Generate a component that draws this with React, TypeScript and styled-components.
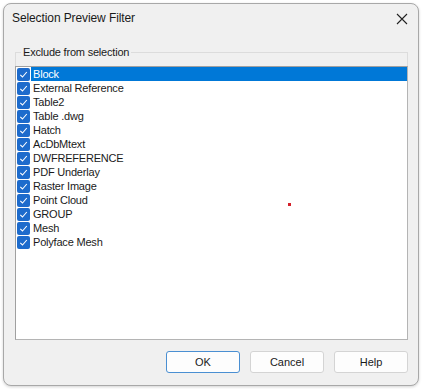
import styled, { createGlobalStyle } from 'styled-components';

const GlobalStyle = createGlobalStyle`
  html, body {
    margin: 0;
    padding: 0;
    background: #ffffff;
  }
  body {
    font-family: "Liberation Sans", Arial, sans-serif;
  }
`;

const items = [
  'Block',
  'External Reference',
  'Table2',
  'Table .dwg',
  'Hatch',
  'AcDbMtext',
  'DWFREFERENCE',
  'PDF Underlay',
  'Raster Image',
  'Point Cloud',
  'GROUP',
  'Mesh',
  'Polyface Mesh',
];

const Page = styled.div`
  padding: 3px;
`;

const Window = styled.div`
  box-sizing: border-box;
  width: 416px;
  height: 383px;
  display: flex;
  flex-direction: column;
  background: #f0f0f0;
  border: 1px solid #a8a8a8;
  border-radius: 8px;
  box-shadow: 0 1px 3px rgba(0, 0, 0, 0.18);
  overflow: hidden;
`;

const TitleBar = styled.div`
  height: 28px;
  display: flex;
  align-items: center;
  justify-content: space-between;
  padding: 0 10px 0 8px;
`;

const Title = styled.span`
  font-size: 12px;
  color: #1a1a1a;
  letter-spacing: -0.1px;
`;

const CloseButton = styled.span`
  display: flex;
  width: 12px;
  height: 12px;
  margin-top: 1px;
`;

const Body = styled.div`
  flex: 1;
  display: flex;
  flex-direction: column;
  padding: 14px 10px 0 11px;
`;

const Group = styled.fieldset`
  margin: 0;
  padding: 7px 0 0;
  border: 1px solid #dcdcdc;
  border-bottom: none;
  min-width: 0;
`;

const Legend = styled.legend`
  margin-left: 5px;
  padding: 0 2px;
  font-size: 11px;
  line-height: 13px;
  color: #1a1a1a;
  letter-spacing: -0.2px;
`;

const List = styled.div`
  position: relative;
  box-sizing: border-box;
  height: 274px;
  margin: 0 -1px;
  background: #ffffff;
  border: 1px solid #b4b4b4;
  border-left-color: #a0a0a0;
  border-top-color: #a0a0a0;
`;

const Row = styled.div`
  display: flex;
  align-items: center;
  height: 14px;
  padding-left: 1px;
`;

const Check = styled.span`
  box-sizing: border-box;
  width: 13px;
  height: 13px;
  border-radius: 2px;
  background: #1d6bcc;
  display: flex;
  align-items: center;
  justify-content: center;
  flex-shrink: 0;
`;

const Label = styled.span<{ $selected?: boolean }>`
  flex: 1;
  margin-left: 1px;
  padding-left: 2px;
  height: 14px;
  line-height: 15px;
  font-size: 11px;
  letter-spacing: -0.2px;
  color: ${(p) => (p.$selected ? '#ffffff' : '#1a1a1a')};
  background: ${(p) => (p.$selected ? '#0078d7' : 'transparent')};
`;

const Dot = styled.span`
  position: absolute;
  left: 272px;
  top: 136px;
  width: 3px;
  height: 3px;
  background: #d4202a;
`;

const Buttons = styled.div`
  display: flex;
  justify-content: flex-end;
  gap: 10px;
  padding-top: 11px;
`;

const Button = styled.button<{ $primary?: boolean }>`
  box-sizing: border-box;
  width: 74px;
  height: 22px;
  padding: 0;
  font-family: "Liberation Sans", Arial, sans-serif;
  font-size: 11px;
  color: #1a1a1a;
  background: #fdfdfd;
  border: 1px solid ${(p) => (p.$primary ? '#4a8fd2' : '#d4d4d4')};
  border-radius: 3px;
`;

const App = () => {
  return (
    <Page>
      <GlobalStyle />
      <Window>
        <TitleBar>
          <Title>Selection Preview Filter</Title>
          <CloseButton>
            <svg width="12" height="12" viewBox="0 0 12 12">
              <path d="M1 1 L11 11 M11 1 L1 11" stroke="#222" strokeWidth="1.1" fill="none" />
            </svg>
          </CloseButton>
        </TitleBar>
        <Body>
          <Group>
            <Legend>Exclude from selection</Legend>
            <List>
              {items.map((item, i) => (
                <Row key={item}>
                  <Check>
                    <svg width="9" height="9" viewBox="0 0 9 9">
                      <path d="M1.3 4.8 L3.5 7 L7.8 2" stroke="#ffffff" strokeWidth="1.1" fill="none" />
                    </svg>
                  </Check>
                  <Label $selected={i === 0}>{item}</Label>
                </Row>
              ))}
              <Dot />
            </List>
          </Group>
          <Buttons>
            <Button $primary>OK</Button>
            <Button>Cancel</Button>
            <Button>Help</Button>
          </Buttons>
        </Body>
      </Window>
    </Page>
  );
};

export default App;
